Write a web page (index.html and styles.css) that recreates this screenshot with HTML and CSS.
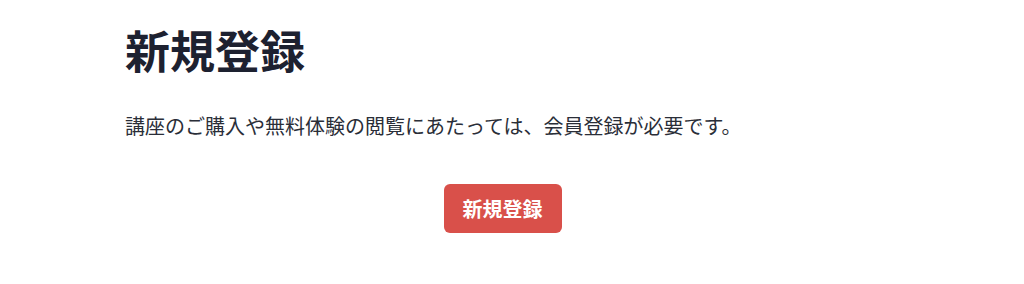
FILE: index.html
```html
<!DOCTYPE html>
<html lang="ja">
<head>
<meta charset="utf-8">
<link rel="stylesheet" href="styles.css">
</head>
<body>
<main class="container">
  <h1 class="title">新規登録</h1>
  <p class="lead">講座のご購入や無料体験の閲覧にあたっては、会員登録が必要です。</p>
  <div class="actions">
    <a class="btn" href="#">新規登録</a>
  </div>
</main>
</body>
</html>
```
FILE: styles.css
```css
* { box-sizing: border-box; }
html, body { margin: 0; background: #fff; }
body {
  font-family: "Noto Sans CJK JP", "Noto Sans", sans-serif;
  color: #1f2430;
}
.container {
  width: 755px;
  margin-left: 125px;
  padding-top: 22px;
}
.title {
  margin: 0;
  font-size: 45px;
  font-weight: 700;
  line-height: 56px;
  color: #1d2130;
}
.lead {
  margin: 34px 0 0;
  font-size: 20px;
  font-weight: 400;
  line-height: 28px;
  color: #2a2e38;
}
.actions {
  display: flex;
  justify-content: center;
  margin-top: 44px;
}
.btn {
  display: inline-flex;
  align-items: center;
  justify-content: center;
  width: 118px;
  height: 49px;
  border-radius: 6px;
  background: #d9504a;
  color: #fff;
  font-size: 20px;
  font-weight: 700;
  text-decoration: none;
}
```
